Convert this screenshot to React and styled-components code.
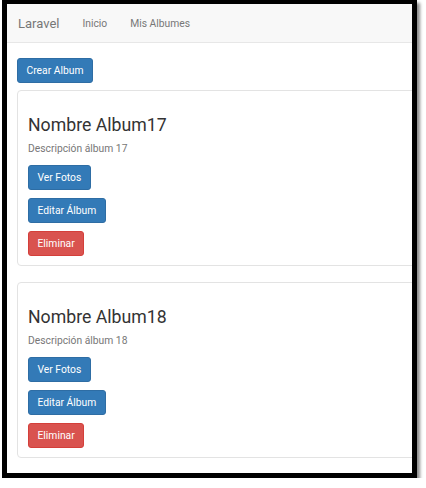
import React from "react"
import styled, { createGlobalStyle } from "styled-components"

const GlobalStyle = createGlobalStyle`
  html, body { margin: 0; padding: 0; background: #fff; }
  body { font-family: Roboto, "Liberation Sans", Arial, sans-serif; color: #333; }
  * { box-sizing: border-box; }
`;

const albums = [
  { id: 17, name: "Nombre Album17", desc: "Descripción álbum 17" },
  { id: 18, name: "Nombre Album18", desc: "Descripción álbum 18" },
  { id: 19, name: "Nombre Album19", desc: "Descripción álbum 19" },
];

const Frame = styled.div`
  margin-left: 2px;
  width: 415px;
  height: 478px;
  border: 5px solid #000;
  border-top-width: 4px;
  overflow: hidden;
  box-shadow: 3px 3px 3px rgba(0, 0, 0, 0.45);
  background: #fff;
`;

const Navbar = styled.nav`
  display: flex;
  align-items: center;
  gap: 23px;
  height: 39px;
  padding-left: 11px;
  background: #f8f8f8;
  border-bottom: 1px solid #e7e7e7;
  color: #777;
  font-size: 10.3px;
`;

const Brand = styled.span`
  font-size: 13px;
  color: #777;
`;

const NavLink = styled.a`
  color: #777;
  text-decoration: none;
`;

const Content = styled.div`
  padding: 15px 0 0 10px;
`;

const Btn = styled.button`
  display: block;
  height: 25px;
  padding: 0 8.5px;
  font-family: inherit;
  font-size: 10.3px;
  color: #fff;
  border-radius: 3px;
  border: 1px solid ${p => (p.danger ? "#d43f3a" : "#2e6da4")};
  background: ${p => (p.danger ? "#d9534f" : "#337ab7")};
  cursor: pointer;
`;

const Panel = styled.div`
  width: 420px;
  margin-top: ${p => (p.first ? "7px" : "16px")};
  padding: 23px 10px 9px;
  border: 1px solid #e3e3e3;
  border-radius: 4px;
  background: #fff;
`;

const Title = styled.h2`
  margin: 0;
  font-size: 17.7px;
  font-weight: 400;
  line-height: 22px;
  color: #333;
`;

const Desc = styled.p`
  margin: 5px 0 8px;
  font-size: 10.3px;
  line-height: 16px;
  color: #777;
`;

const Actions = styled.div`
  display: flex;
  flex-direction: column;
  align-items: flex-start;
  gap: 8px;
`;

const App = () => {
  return (
    <>
      <GlobalStyle />
      <Frame>
        <Navbar>
          <Brand>Laravel</Brand>
          <NavLink href="#">Inicio</NavLink>
          <NavLink href="#">Mis Albumes</NavLink>
        </Navbar>
        <Content>
          <Btn>Crear Album</Btn>
          {albums.map((a, k) => (
            <Panel key={a.id} first={k === 0}>
              <Title>{a.name}</Title>
              <Desc>{a.desc}</Desc>
              <Actions>
                <Btn>Ver Fotos</Btn>
                <Btn>Editar Álbum</Btn>
                <Btn danger>Eliminar</Btn>
              </Actions>
            </Panel>
          ))}
        </Content>
      </Frame>
    </>
  )
}

export default App;
